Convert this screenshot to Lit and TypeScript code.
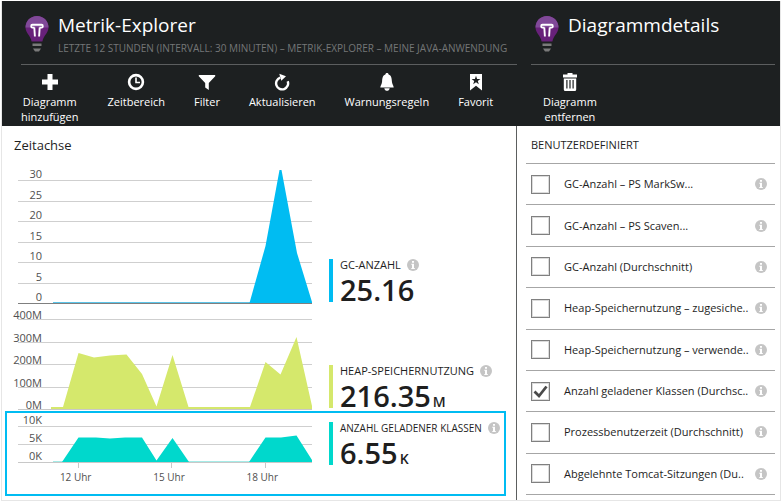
import { LitElement, html, svg, css, nothing } from "lit";
import { customElement, property, state } from "lit/decorators.js";

const bulbIcon = html`<svg class="bulb" viewBox="0 0 24 37" width="24" height="37" aria-hidden="true">
  <path d="M12 0C5.500 0 .5 5 .5 11.300C.5 17 5.500 19.500 6.600 25.500H17.400C18.500 19.500 23.500 17 23.500 11.300C23.500 5 18.500 0 12 0Z" fill="#68217a" />
  <path d="M12 0C5.500 0 .5 5 .5 11.500H23.500C23.500 5 18.500 0 12 0Z" fill="#804998" />
  <path d="M9.900 20.500L9.300 11.500M14.100 20.500L14.700 11.500M9.500 11.600H7.400C5.800 11.600 5.800 8.700 7.400 8.700H16.600C18.200 8.700 18.200 11.600 16.600 11.600H14.500" fill="none" stroke="#fff" stroke-width="1.900" />
  <path d="M7.500 27.500H16.500V30H7.500ZM8 32.500H16L14 35.500H10Z" fill="#7a7a7a" />
</svg>`;

const icons: Record<string, unknown> = {
  plus: svg`<path d="M6.500 1H11.500V6.500H17V11.500H11.500V17H6.500V11.500H1V6.500H6.500Z"/>`,
  clock: svg`<circle cx="9" cy="9" r="6.900" fill="none" stroke="#fff" stroke-width="2.600"/><path d="M9 4.500V9.500H13" fill="none" stroke="#fff" stroke-width="1.600"/>`,
  filter: svg`<path d="M.8 2H17.200V3.200L10.800 10V17L7.200 14.500V10L.8 3.200Z"/>`,
  refresh: svg`<path d="M14.700 8.200A6 6 0 1 1 7.200 4.700" fill="none" stroke="#fff" stroke-width="2.400"/><path d="M6.300 .8L13 3.200L8.300 7.800Z"/>`,
  bell: svg`<path d="M9 0C10 0 10.600.7 10.600 1.600C13.500 2.600 13.700 5.500 13.900 8.500C14.100 11.500 15.500 12 15.700 14.500H2.300C2.500 12 3.900 11.500 4.100 8.500C4.300 5.500 4.500 2.600 7.400 1.600C7.400.7 8 0 9 0ZM6.300 15.200H11.700C11.300 17 10.300 17.800 9 17.800C7.700 17.800 6.700 17 6.300 15.200Z"/>`,
  favorite: svg`<path fill-rule="evenodd" d="M3 1H15V17.500L9 12.800L3 17.500ZM9 2.700L7.900 5.900H4.600L7.200 7.900L6.200 11.200L9 9.200L11.800 11.200L10.800 7.900L13.400 5.900H10.100Z"/>`,
  trash: svg`<path fill-rule="evenodd" d="M6.500 0H11.500V1.500H16V4.500H2V1.500H6.500ZM2.800 5.500H15.200V16.500Q15.200 18 13.700 18H4.300Q2.800 18 2.800 16.500ZM5.300 7V15.500H6.500V7ZM8.400 7V15.500H9.600V7ZM11.500 7V15.500H12.700V7Z"/>`,
};

const infoIcon = html`<svg viewBox="0 0 12 12" width="12" height="12" aria-hidden="true">
  <circle cx="6" cy="6" r="6" fill="#c5c5c5" />
  <path d="M5 2H7V3.700H5ZM4.300 4.800H7V9H7.800V10H4.300V9H5V5.700H4.300Z" fill="#fff" />
</svg>`;

const baseStyles = css`
  * { box-sizing: border-box; }
  button {
    margin: 0;
    padding: 0;
    border: 0;
    background: none;
    color: inherit;
    font: inherit;
    cursor: pointer;
  }
  svg { display: block; flex: none; }
`;

interface Command { icon: string; label: string; }

@customElement("blade-panel")
class BladePanel extends LitElement {
  @property() heading = "";
  @property() subtitle = "";
  @property({ attribute: false }) commands: Command[] = [];

  static styles = [baseStyles, css`
    :host { display: flex; flex-direction: column; min-width: 0; }
    header { background: #1d2021; color: #fff; height: 125px; }
    .title {
      display: flex;
      gap: 9px;
      height: 64px;
      margin-left: var(--inset-left);
      margin-right: var(--inset-right);
      padding: 15px 0 0 4px;
      border-bottom: 1px solid #5c5e5f;
    }
    h1 { margin: 0; font-size: 19px; font-weight: 400; line-height: 18px; white-space: nowrap; }
    p {
      margin: 7px 0 0;
      color: #747677;
      font-size: 10px;
      font-weight: 500;
      line-height: 14px;
      white-space: nowrap;
    }
    nav {
      display: flex;
      gap: 29px;
      margin-left: var(--inset-left);
      padding: 8px 0 0 var(--nav-shift, 0px);
      font-size: 11px;
      line-height: 15px;
    }
    nav button {
      display: flex;
      flex-direction: column;
      align-items: center;
      gap: 3px;
      text-align: center;
      white-space: pre-line;
    }
    .content { flex: 1; display: flex; flex-direction: column; }
  `];

  render() {
    return html`
      <header>
        <div class="title">
          ${bulbIcon}
          <div>
            <h1>${this.heading}</h1>
            ${this.subtitle ? html`<p>${this.subtitle}</p>` : nothing}
          </div>
        </div>
        <nav>
          ${this.commands.map((c) => html`<button type="button">
            <svg viewBox="0 0 18 18" width="18" height="18" fill="#fff" aria-hidden="true">${icons[c.icon]}</svg>
            <span>${c.label}</span>
          </button>`)}
        </nav>
      </header>
      <div class="content"><slot></slot></div>
    `;
  }
}

interface Metric {
  name: string;
  value: string;
  unit: string;
  color: string;
  baseline: string;
  kind: string;
  height: number;
  labels: string[];
  points: string;
  start: number;
  ticks?: string[];
}

const metrics: Metric[] = [
  {
    name: "GC-ANZAHL", value: "25.16", unit: "", color: "#00bcf2", baseline: "#5bc4e8", kind: "count", height: 143,
    labels: ["30", "25", "20", "15", "10", "5", "0"], start: 35,
    points: "231.5,142 247.5,85 261.500,9 263.500,9 279,92 294,141 294,142",
  },
  {
    name: "HEAP-SPEICHERNUTZUNG", value: "216.35", unit: "M", color: "#d5e86c", baseline: "#d5e86c", kind: "heap", height: 106,
    labels: ["400M", "300M", "200M", "100M", "0M"], start: 33,
    points: "45,105 45,103 60.500,49 76,53.500 92,51.500 108.500,50.500 124,70 138.500,102.500 154.500,51 170.500,103 232,103 247.500,58 262.500,70.500 278.500,33 294,102 294,105",
  },
  {
    name: "ANZAHL GELADENER KLASSEN", value: "6.55", unit: "K", color: "#00d8cc", baseline: "#a5ebe7", kind: "classes", height: 50,
    labels: ["10K", "5K", "0K"], start: 35, ticks: ["12 Uhr", "15 Uhr", "18 Uhr"],
    points: "44,49 60.500,24.500 78,24.500 92,25.500 107,24.500 124,24.500 138.500,47.500 154.500,25 171,49 231,49 247.500,24.500 263,24.500 278.500,22.500 294,47 294,49",
  },
];

@customElement("metric-chart")
class MetricChart extends LitElement {
  @property({ attribute: false }) metric!: Metric;

  static styles = [baseStyles, css`
    :host {
      display: grid;
      grid-template-columns: minmax(0, 1fr) 175px;
      column-gap: 17px;
      margin: 0 10px 0 3px;
      padding-left: 11px;
      border: 0 solid transparent;
      border-width: 0 2px;
    }
    :host([selected]) { border: 2px solid #00bcf2; margin-top: 1px; }
    .plot { position: relative; display: grid; grid-auto-rows: minmax(0, 1fr); }
    .count { height: 143px; --label-line: 13px; --axis: #7f7f7f; }
    .heap { height: 106px; grid-template-rows: 16px; --label-line: 9px; }
    .classes { height: 50px; grid-template-rows: 14px; --label-line: 13px; }
    .line {
      display: flex;
      align-items: flex-end;
      border-bottom: 1px solid #cfcfcf;
      color: #505050;
      font-size: 11px;
      line-height: var(--label-line);
    }
    .line:last-of-type { border-color: var(--axis, #c8c8c8); }
    .line span { width: 28px; margin-left: -4px; display: flex; justify-content: flex-end; }
    .area { position: absolute; inset: 0; width: 100%; height: 100%; }
    .axis {
      display: grid;
      grid-template-columns: repeat(3, 1fr);
      height: 31px;
      padding-left: 14px;
      color: #505050;
      font-size: 10px;
      line-height: 14px;
      text-align: center;
    }
    .axis span { padding-right: 6px; }
    .axis div::before {
      content: "";
      display: block;
      width: 1px;
      height: 5px;
      margin: 0 auto 2px;
      background: #c8c8c8;
    }
    .legend {
      align-self: end;
      height: 43px;
      padding-left: 7px;
      border-left: 4px solid;
      margin-bottom: 2px;
      white-space: nowrap;
    }
    :host([selected]) .legend { align-self: start; margin: 9px 0 0; }
    .name {
      display: flex;
      align-items: center;
      gap: 6px;
      height: 12px;
      color: #1e1e1e;
      font-size: 11px;
      line-height: 12px;
    }
    :host([selected]) .name { font-size: 10px; }
    .value {
      display: flex;
      align-items: baseline;
      gap: 2px;
      color: #1e1e1e;
      font-size: 29px;
      font-weight: 600;
      line-height: 38px;
    }
    .unit { font-size: 14px; }
  `];

  render() {
    const m = this.metric;
    const floor = m.height - 2;
    return html`
      <div>
        <div class="plot ${m.kind}">
          ${m.labels.map((l) => html`<div class="line"><span>${l}</span></div>`)}
          <svg class="area" viewBox="0 0 294 ${m.height}" preserveAspectRatio="none" aria-hidden="true">
            <path d="M${m.start} ${floor + 0.5}H294" stroke=${m.baseline} stroke-width="1" />
            <polygon points=${m.points} fill=${m.color} />
            ${m.kind === "heap" ? svg`<path d="M${m.start} ${floor}H294" stroke=${m.color} stroke-width="2" />` : nothing}
          </svg>
        </div>
        ${m.ticks ? html`<div class="axis">${m.ticks.map((t) => html`<div><span>${t}</span></div>`)}</div>` : nothing}
      </div>
      <div class="legend" style="border-color:${m.color}">
        <div class="name">${m.name}<button type="button" aria-label="Info">${infoIcon}</button></div>
        <div class="value">${m.value}${m.unit ? html`<span class="unit">${m.unit}</span>` : nothing}</div>
      </div>
    `;
  }
}

@customElement("metric-list")
class MetricList extends LitElement {
  @state() private items = [
    { label: "GC-Anzahl – PS MarkSw...", checked: false },
    { label: "GC-Anzahl – PS Scaven...", checked: false },
    { label: "GC-Anzahl (Durchschnitt)", checked: false },
    { label: "Heap-Speichernutzung – zugesiche..", checked: false },
    { label: "Heap-Speichernutzung – verwende..", checked: false },
    { label: "Anzahl geladener Klassen (Durchsc..", checked: true },
    { label: "Prozessbenutzerzeit (Durchschnitt)", checked: false },
    { label: "Abgelehnte Tomcat-Sitzungen (Du..", checked: false },
  ];

  static styles = [baseStyles, css`
    :host { flex: 1; display: flex; flex-direction: column; padding: 0 5px 5px 9px; }
    h2 {
      margin: 0;
      padding: 11px 0 10px 5px;
      color: #1e1e1e;
      font-size: 11px;
      font-weight: 400;
      line-height: 16px;
    }
    ul {
      flex: 1;
      display: grid;
      grid-auto-rows: minmax(41px, 1fr);
      margin: 0;
      padding: 0;
      border-top: 1px solid #a6a6a6;
      list-style: none;
    }
    li {
      display: flex;
      align-items: center;
      padding: 0 8px 0 5px;
      border-bottom: 1px solid #a6a6a6;
    }
    label {
      flex: 1;
      min-width: 0;
      display: flex;
      align-items: center;
      gap: 14px;
      color: #1e1e1e;
      font-size: 11px;
      line-height: 16px;
      white-space: nowrap;
    }
    .box { display: grid; }
    .box > * { grid-area: 1 / 1; }
    input {
      appearance: none;
      width: 19px;
      height: 19px;
      margin: 0;
      border: 1px solid #808080;
      box-shadow: inset 0 0 0 1px #dcdcdc;
      background: #fff;
    }
    .box svg { pointer-events: none; }
  `];

  private toggle(index: number) {
    this.items = this.items.map((it, i) => (i === index ? { ...it, checked: !it.checked } : it));
  }

  render() {
    return html`
      <h2>BENUTZERDEFINIERT</h2>
      <ul>
        ${this.items.map((it, i) => html`<li>
          <label>
            <span class="box">
              <input type="checkbox" .checked=${it.checked} @change=${() => this.toggle(i)} />
              ${it.checked ? html`<svg viewBox="0 0 19 19" width="19" height="19" aria-hidden="true">
                <path d="M3.500 9.500L8 14L15.500 4.500" fill="none" stroke="#4a4a4a" stroke-width="2.800" />
              </svg>` : nothing}
            </span>
            <span>${it.label}</span>
          </label>
          <button type="button" aria-label="Info">${infoIcon}</button>
        </li>`)}
      </ul>
    `;
  }
}

@customElement("app-root")
class AppRoot extends LitElement {
  static styles = css`
    :host {
      display: block;
      padding: 1px;
      background: #fff;
      font-family: "Open Sans", "Noto Sans", sans-serif;
    }
    main {
      display: grid;
      grid-template-columns: minmax(0, 515fr) minmax(0, 263fr);
      border: 1px solid #e6e6e6;
      border-top: 0;
    }
    .explorer { --inset-left: 19px; --inset-right: 0px; }
    .details { --inset-left: 14px; --inset-right: 5px; --nav-shift: 12px; }
    .timeline { flex: 1; padding-bottom: 4px; border-right: 1px solid #5c5e5f; }
    h2 {
      margin: 0;
      padding: 10px 0 7px 12px;
      color: #1e1e1e;
      font-size: 13px;
      font-weight: 400;
      line-height: 18px;
    }
  `;

  render() {
    return html`<main>
      <blade-panel
        class="explorer"
        heading="Metrik-Explorer"
        subtitle="LETZTE 12 STUNDEN (INTERVALL: 30 MINUTEN) – METRIK-EXPLORER – MEINE JAVA-ANWENDUNG"
        .commands=${[
          { icon: "plus", label: "Diagramm\nhinzufügen" },
          { icon: "clock", label: "Zeitbereich" },
          { icon: "filter", label: "Filter" },
          { icon: "refresh", label: "Aktualisieren" },
          { icon: "bell", label: "Warnungsregeln" },
          { icon: "favorite", label: "Favorit" },
        ]}
      >
        <section class="timeline">
          <h2>Zeitachse</h2>
          ${metrics.map((m) => html`<metric-chart .metric=${m} ?selected=${m.kind === "classes"}></metric-chart>`)}
        </section>
      </blade-panel>
      <blade-panel
        class="details"
        heading="Diagrammdetails"
        .commands=${[{ icon: "trash", label: "Diagramm\nentfernen" }]}
      >
        <metric-list></metric-list>
      </blade-panel>
    </main>`;
  }
}
